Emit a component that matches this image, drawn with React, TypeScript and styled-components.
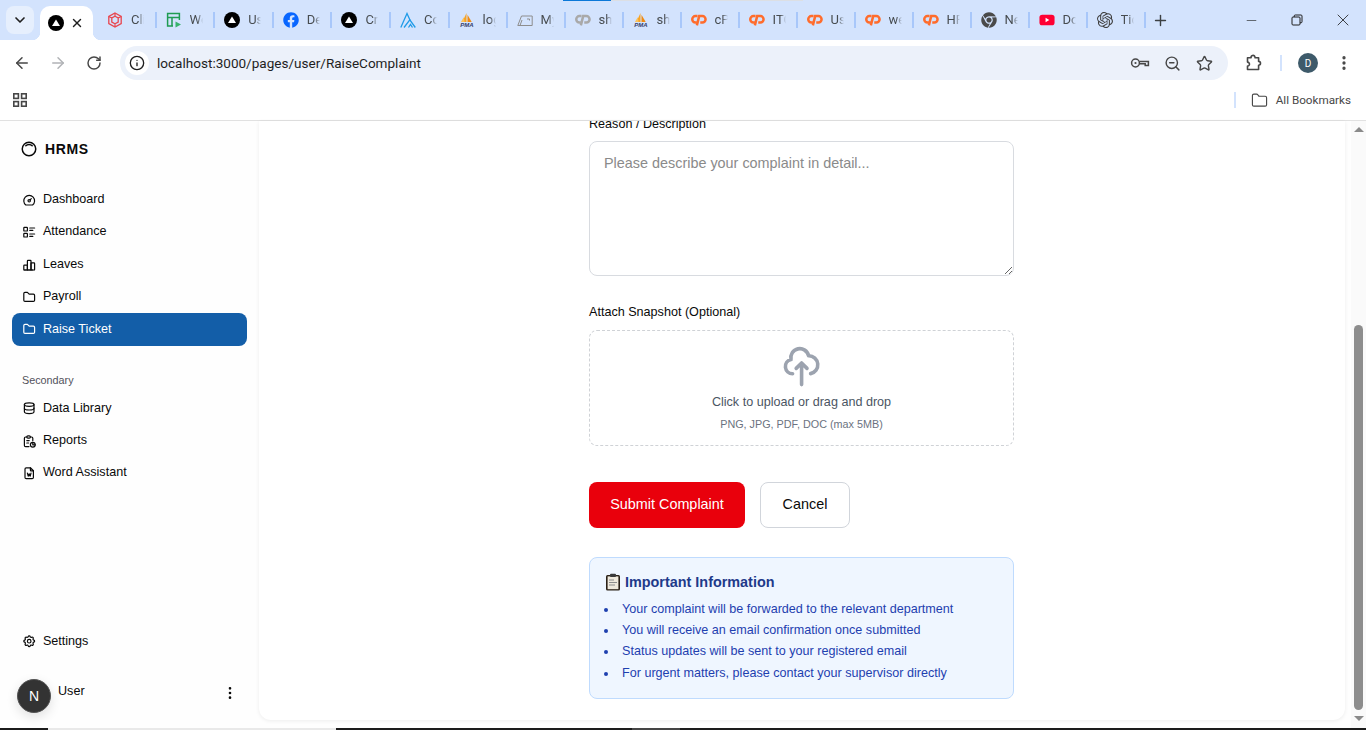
import React from 'react';
import styled, { createGlobalStyle } from 'styled-components';
import { ArrowLeft, ArrowRight, RotateCw, Info, ZoomOut, Star, X, Plus, ChevronDown, Minus, EllipsisVertical, Folder } from 'lucide-react';
import { FaFacebook, FaChrome } from 'react-icons/fa';
import { SiOpenai } from 'react-icons/si';
import {
  TbDashboard, TbListDetails, TbChartBar, TbFolder, TbDatabase, TbReport, TbFileWord,
  TbSettings, TbInnerShadowTop, TbDotsVertical,
} from 'react-icons/tb';

const GlobalStyle = createGlobalStyle`
  html, body { margin: 0; padding: 0; background: #fff; overflow: hidden; }
  * { box-sizing: border-box; }
`;

const Screen = styled.div`
  width: 1366px;
  height: 730px;
  display: flex;
  flex-direction: column;
  position: relative;
  overflow: hidden;
  font-family: "Liberation Sans", Arial, sans-serif;
  color: #0a0a0a;
`;

/* ---- browser chrome ---- */

const TabStrip = styled.div`
  height: 40px;
  flex: none;
  background: #d3e3fd;
  display: flex;
  align-items: flex-end;
  padding-left: 6px;
  position: relative;
  font-family: Roboto, sans-serif;
`;

const LoadingLine = styled.div`
  position: absolute;
  top: 0;
  left: 563px;
  width: 240px;
  height: 1px;
  background: linear-gradient(90deg, #0b78d8 0 48px, #dcdfe4 48px);
`;

const TabSearch = styled.div`
  width: 28px;
  height: 28px;
  margin: 0 6px 6px 0;
  border-radius: 8px;
  background: #e6effd;
  display: flex;
  align-items: center;
  justify-content: center;
  color: #1f1f1f;
`;

const ActiveTab = styled.div`
  width: 53px;
  height: 34px;
  margin-right: 4px;
  background: #fff;
  border-radius: 10px 10px 0 0;
  display: flex;
  align-items: center;
  padding-left: 8px;
  gap: 6px;
  position: relative;
  color: #1f1f1f;
  &::before, &::after {
    content: '';
    position: absolute;
    bottom: 0;
    width: 8px;
    height: 8px;
  }
  &::before { left: -8px; background: radial-gradient(circle at 0 0, transparent 8px, #fff 8.5px); }
  &::after { right: -8px; background: radial-gradient(circle at 100% 0, transparent 8px, #fff 8.5px); }
`;

const Tab = styled.div<{ $wide?: boolean }>`
  width: ${(p) => (p.$wide ? 58.6 : 58)}px;
  height: 40px;
  flex: none;
  display: flex;
  align-items: center;
  padding: 0 0 0 10px;
  gap: 8px;
  position: relative;
  &::after {
    content: '';
    position: absolute;
    right: -1px;
    top: 12px;
    width: 2px;
    height: 16px;
    background: #a8c7fa;
  }
`;

const TabIcon = styled.span`
  width: 16px;
  height: 16px;
  flex: none;
  display: flex;
  align-items: center;
  justify-content: center;
`;

const TabTitle = styled.span`
  width: 13px;
  font-size: 13px;
  line-height: 16px;
  color: #474c50;
  white-space: nowrap;
  overflow: hidden;
  -webkit-mask-image: linear-gradient(90deg, #000 55%, transparent);
  mask-image: linear-gradient(90deg, #000 55%, transparent);
`;

const NewTab = styled.div`
  width: 24px;
  height: 40px;
  margin-left: 4px;
  display: flex;
  align-items: center;
  justify-content: center;
  color: #3c4043;
`;

const WindowControls = styled.div`
  margin-left: auto;
  height: 40px;
  display: flex;
  color: #1f1f1f;
`;

const WindowButton = styled.div`
  width: 46px;
  height: 40px;
  display: flex;
  align-items: center;
  justify-content: center;
`;

const Toolbar = styled.div`
  height: 41px;
  flex: none;
  background: #fff;
  border-radius: 8px 8px 0 0;
  display: flex;
  align-items: center;
  padding: 6px 0 1px 4px;
  font-family: Roboto, sans-serif;
  color: #474747;
`;

const ToolButton = styled.div<{ $muted?: boolean; $w?: number }>`
  width: ${(p) => p.$w ?? 36}px;
  height: 32px;
  flex: none;
  display: flex;
  align-items: center;
  justify-content: center;
  color: ${(p) => (p.$muted ? '#b1b3b6' : '#474747')};
`;

const Omnibox = styled.div`
  width: 1108px;
  height: 34px;
  margin-left: 8px;
  flex: none;
  background: #ecf1fa;
  border-radius: 17px;
  display: flex;
  align-items: center;
  padding: 0 8px 0 5px;
`;

const SiteInfo = styled.div`
  width: 24px;
  height: 24px;
  border-radius: 50%;
  background: #fff;
  display: flex;
  align-items: center;
  justify-content: center;
  color: #1f1f1f;
`;

const Url = styled.div`
  margin-left: 8px;
  font-size: 13.55px;
  color: #1f1f1f;
  flex: 1;
`;

const ToolbarDivider = styled.div`
  width: 2px;
  height: 16px;
  background: #d3e3fd;
`;

const ProfileDot = styled.div`
  width: 20px;
  height: 20px;
  border-radius: 50%;
  background: #3e5a6a;
  color: #fff;
  font-size: 10px;
  display: flex;
  align-items: center;
  justify-content: center;
`;

const BookmarkBar = styled.div`
  height: 40px;
  flex: none;
  background: #fff;
  border-bottom: 1px solid #e1e1e1;
  display: flex;
  align-items: center;
  padding: 0 15px 1px 13px;
  font-family: Roboto, sans-serif;
  color: #474747;
`;

const BookmarkDivider = styled.div`
  width: 2px;
  height: 16px;
  margin-left: auto;
  background: #d3e3fd;
`;

const BookmarkFolder = styled.div`
  display: flex;
  align-items: center;
  gap: 8px;
  margin-left: 15px;
  font-size: 11.7px;
  color: #474747;
`;

/* ---- page ---- */

const PageBody = styled.div`
  flex: 1;
  min-height: 0;
  display: flex;
  background: #fefefe;
`;

const Sidebar = styled.aside`
  width: 259px;
  flex: none;
  display: flex;
  flex-direction: column;
  padding: 19px 12px 15.5px;
`;

const Brand = styled.div`
  display: flex;
  align-items: center;
  height: 18px;
  padding-left: 8px;
  gap: 7px;
  font-size: 14px;
  font-weight: 700;
  letter-spacing: 0.6px;
  color: #0a0a0a;
  margin-bottom: 25.5px;
`;

const NavItem = styled.div<{ $active?: boolean }>`
  height: 33px;
  margin-bottom: -0.6px;
  display: flex;
  align-items: center;
  gap: 7px;
  padding: 0 9.5px;
  border-radius: 8px;
  font-size: 12.6px;
  color: ${(p) => (p.$active ? '#fff' : '#0a0a0a')};
  background: ${(p) => (p.$active ? '#135ea8' : 'transparent')};
  & > span { position: relative; top: -1px; }
`;

const SectionLabel = styled.div`
  font-size: 10.8px;
  line-height: 14px;
  color: #52525b;
  padding-left: 10px;
  margin: 27.5px 0 5px;
`;

const SidebarFooter = styled.div`
  margin-top: auto;
`;

const UserRow = styled.div`
  display: flex;
  align-items: flex-start;
  height: 34px;
  margin-top: 21px;
  padding-left: 5px;
`;

const Avatar = styled.div`
  width: 34px;
  height: 34px;
  border-radius: 50%;
  background: #333;
  border: 1px solid #555;
  color: #fff;
  font-size: 14px;
  display: flex;
  align-items: center;
  justify-content: center;
  box-shadow: 0 4px 12px rgba(0, 0, 0, 0.12);
`;

const UserName = styled.div`
  margin: 5px 0 0 7px;
  font-size: 12.6px;
  flex: 1;
`;

const UserMenu = styled.div`
  width: 16px;
  margin: 6px 9px 0 0;
  display: flex;
  justify-content: center;
`;

const MainArea = styled.main`
  flex: 1;
  min-width: 0;
  padding: 0 6px 8px 0;
`;

const Card = styled.div`
  height: 100%;
  background: #fff;
  border-radius: 0 0 12px 12px;
  box-shadow: 0 1px 4px rgba(0, 0, 0, 0.07);
  overflow: hidden;
`;

const Form = styled.div`
  width: 425px;
  margin: -7px 0 0 330px;
  display: flex;
  flex-direction: column;
`;

const FieldLabel = styled.label`
  display: block;
  font-size: 12.6px;
  line-height: 20px;
  color: #0a0a0a;
  margin-bottom: 8px;
`;

const Textarea = styled.textarea`
  display: block;
  width: 425px;
  height: 135px;
  margin: -1px 0 26px;
  padding: 11px 14px;
  border: 1px solid #d8dbe0;
  border-radius: 8px;
  background: #fff;
  font-family: "Liberation Sans", Arial, sans-serif;
  font-size: 14.4px;
  line-height: 20px;
  outline: none;
  &::placeholder { color: #8a8a8a; }
`;

const DropZone = styled.div`
  height: 116px;
  border: 1px dashed #cfd2d6;
  border-radius: 8px;
  display: flex;
  flex-direction: column;
  align-items: center;
  padding-top: 14px;
  margin-bottom: 36px;
`;

const DropTitle = styled.div`
  margin-top: 3.8px;
  font-size: 12.6px;
  line-height: 20px;
  color: #4b5563;
`;

const DropHint = styled.div`
  margin-top: 2px;
  font-size: 10.8px;
  line-height: 20px;
  color: #6b7280;
`;

const Actions = styled.div`
  display: flex;
  gap: 15px;
  margin-bottom: 29px;
`;

const Button = styled.button<{ $primary?: boolean }>`
  height: 46px;
  width: ${(p) => (p.$primary ? 156 : 90)}px;
  border-radius: 8px;
  border: ${(p) => (p.$primary ? 'none' : '1px solid #d1d5db')};
  background: ${(p) => (p.$primary ? '#e9000c' : '#fff')};
  color: ${(p) => (p.$primary ? '#fff' : '#0a0a0a')};
  font-family: "Liberation Sans", Arial, sans-serif;
  font-size: 14.4px;
  padding: 0 0 2px;
`;

const InfoBox = styled.section`
  height: 142px;
  background: #eff6ff;
  border: 1px solid #bfdbfe;
  border-radius: 8px;
  padding: 14px 15px 0;
`;

const InfoTitle = styled.h3`
  margin: 0 0 6.5px;
  display: flex;
  align-items: center;
  gap: 4px;
  height: 20px;
  font-size: 14.4px;
  font-weight: 700;
  color: #1e3a8a;
`;

const InfoList = styled.ul`
  margin: 0;
  padding: 0 0 0 17px;
  list-style: none;
  font-size: 12.6px;
  line-height: 21.4px;
  color: #1e40af;
`;

const InfoItem = styled.li`
  position: relative;
  &::before {
    content: '';
    position: absolute;
    left: -18px;
    top: 9px;
    width: 4px;
    height: 4px;
    border-radius: 50%;
    background: #1e40af;
  }
`;

const ScrollTrack = styled.div`
  width: 15px;
  flex: none;
  background: #fafafa;
  display: flex;
  flex-direction: column;
  align-items: center;
  padding: 6px 0 7px;
`;

const ScrollArrow = styled.div<{ $down?: boolean }>`
  width: 0;
  height: 0;
  border-left: 5px solid transparent;
  border-right: 5px solid transparent;
  ${(p) => (p.$down ? 'border-top: 5px solid #8a8a8a;' : 'border-bottom: 5px solid #8a8a8a;')}
`;

const ScrollThumb = styled.div`
  width: 9px;
  height: 385px;
  margin-top: auto;
  margin-bottom: 6px;
  border-radius: 5px;
  background: #8d8d8d;
`;

const Taskbar = styled.div`
  height: 2px;
  flex: none;
  display: flex;
  background: #1b1b1b;
`;

const TaskSegment = styled.div<{ $w: number; $left: number; $color: string }>`
  width: ${(p) => p.$w}px;
  margin-left: ${(p) => p.$left}px;
  background: ${(p) => p.$color};
`;

/* ---- drawn icons ---- */

const NextIcon = () => (
  <svg width="16" height="16" viewBox="0 0 16 16">
    <circle cx="8" cy="8" r="8" fill="#000" />
    <path d="M8 4.4 12 11H4z" fill="#fff" />
  </svg>
);

const CubeIcon = () => (
  <svg width="16" height="16" viewBox="0 0 16 16" fill="none" stroke="#e8464f" strokeWidth="1.3">
    <path d="M8 1 14.2 4.5v7L8 15l-6.2-3.5v-7z" />
    <path d="M8 4.2 11.2 6v4L8 11.8 4.8 10V6zM8 1v3.2M14.2 4.5 11.2 6M1.8 4.5 4.8 6M8 15v-3.2" />
  </svg>
);

const SheetIcon = () => (
  <svg width="16" height="16" viewBox="0 0 16 16" fill="none">
    <path d="M7 14H1.6V1.6h11.8V8M1.6 5.4h11.8M6 5.4V14" stroke="#1e9b52" strokeWidth="1.5" />
    <path d="M9.5 9.5 15 12.4 9.5 15.4z" fill="#37b36c" />
  </svg>
);

const PeaksIcon = () => (
  <svg width="16" height="17" viewBox="0 0 16 17" fill="none" stroke="#1f9be8" strokeWidth="1.3">
    <path d="M.8 15.5 7 1.5l3.2 7" />
    <path d="M4 15.5 9.8 7.8l5.5 7.7" />
    <path d="M8.5 15.5l2-3 2 3" />
  </svg>
);

const PmaIcon = () => (
  <svg width="17" height="16" viewBox="0 0 17 16">
    <path d="M8 .5 3.5 10H8z" fill="#f7a324" />
    <path d="M9 2.5 13.5 10H9z" fill="#f08a12" />
    <path d="M2 10 5 5 6 10z" fill="#fbc25b" />
    <text x="8.5" y="15.6" fontSize="6.4" fontWeight="700" fontStyle="italic" textAnchor="middle" fill="#34406b" fontFamily="Liberation Sans">PMA</text>
  </svg>
);

const WorkbenchIcon = () => (
  <svg width="16" height="16" viewBox="0 0 16 16" fill="none" stroke="#8d8d8d" strokeWidth="1">
    <path d="M.8 13.5 4.5 4h10.7v9.5z" />
    <path d="M3 13.5 5 8M10 7h2.5v1.5" />
  </svg>
);

const CpanelIcon = ({ color }: { color: string }) => (
  <svg width="17" height="14" viewBox="0 0 18 14" fill="none" stroke={color} strokeWidth="2.8">
    <path d="M7.4 2.6H5a3.6 3.6 0 0 0 0 7.2h1.6" />
    <path d="M6.6 13 9.2 2.6h3.6a3.6 3.6 0 0 1 0 7.2h-2.4" />
  </svg>
);

const YoutubeIcon = () => (
  <svg width="18" height="16" viewBox="0 0 18 16">
    <rect x="0.5" y="2" width="17" height="12" rx="3.2" fill="#ff0033" />
    <path d="M7.4 5.6 11.6 8l-4.2 2.4z" fill="#fff" />
  </svg>
);

const KeyIcon = () => (
  <svg width="20" height="20" viewBox="0 0 20 20" fill="none" stroke="currentColor" strokeWidth="1.5">
    <circle cx="5.5" cy="10" r="3.9" />
    <circle cx="5.5" cy="10" r="1.1" fill="currentColor" stroke="none" />
    <path d="M9.4 8.4h9v4h-3.2v-1.6H9.4" />
  </svg>
);

const PuzzleIcon = () => (
  <svg width="20" height="20" viewBox="0 0 20 20" fill="none" stroke="currentColor" strokeWidth="1.6" strokeLinejoin="round">
    <path d="M3.5 4.8h3.6a2 2 0 0 1 3.8-1.2c.2.4.2.8.1 1.2h3.6v3.6a1.9 1.9 0 0 1 0 3.8v4.3H3.5v-3.4a2 2 0 0 0 1.6-3.2 2 2 0 0 0-1.6-.8z" />
  </svg>
);

const AppsIcon = () => (
  <svg width="14" height="14" viewBox="0 0 14 14" fill="none" stroke="#474747" strokeWidth="1.6">
    <rect x="0.8" y="0.8" width="4.6" height="4.6" />
    <rect x="8.6" y="0.8" width="4.6" height="4.6" />
    <rect x="0.8" y="8.6" width="4.6" height="4.6" />
    <rect x="8.6" y="8.6" width="4.6" height="4.6" />
  </svg>
);

const RestoreIcon = () => (
  <svg width="12" height="12" viewBox="0 0 12 12" fill="none" stroke="currentColor" strokeWidth="1">
    <rect x="1" y="3" width="8" height="8" rx="1" />
    <path d="M3.2 3V2a1 1 0 0 1 1-1H10a1 1 0 0 1 1 1v5.8a1 1 0 0 1-1 1H9" />
  </svg>
);

const CloudUploadIcon = () => (
  <svg width="43.2" height="43.2" viewBox="0 0 24 24" fill="none" stroke="#9ca3af" strokeWidth="2" strokeLinecap="round" strokeLinejoin="round">
    <path d="M7 16a4 4 0 01-.88-7.903A5 5 0 1115.9 6L16 6a5 5 0 011 9.9M15 13l-3-3m0 0l-3 3m3-3v12" />
  </svg>
);

const ClipboardIcon = () => (
  <svg width="16" height="18" viewBox="0 0 16 18">
    <rect x="1" y="2" width="14" height="15.5" rx="1.5" fill="#2b2117" />
    <rect x="2.6" y="3.4" width="10.8" height="12.8" fill="#efe9dc" />
    <rect x="5" y="0.8" width="6" height="3.2" rx="1" fill="#3a3a3a" />
    <path d="M4 7h5M4 9.5h8M4 12h6" stroke="#8d8d8d" strokeWidth="1.1" />
  </svg>
);

/* ---- data ---- */

const cpanel = <CpanelIcon color="#ff6c2c" />;

const tabs: { icon: React.ReactNode; title: string }[] = [
  { icon: <CubeIcon />, title: 'Client' },
  { icon: <SheetIcon />, title: 'Web' },
  { icon: <NextIcon />, title: 'Users' },
  { icon: <FaFacebook size={16} color="#0866ff" />, title: 'Dev' },
  { icon: <NextIcon />, title: 'Create' },
  { icon: <PeaksIcon />, title: 'Coolify' },
  { icon: <PmaIcon />, title: 'login' },
  { icon: <WorkbenchIcon />, title: 'MySQL' },
  { icon: <CpanelIcon color="#a9a9a9" />, title: 'shop' },
  { icon: <PmaIcon />, title: 'shop' },
  { icon: cpanel, title: 'cPanel' },
  { icon: cpanel, title: 'ITC' },
  { icon: cpanel, title: 'Users' },
  { icon: cpanel, title: 'web' },
  { icon: cpanel, title: 'HR' },
  { icon: <FaChrome size={16} color="#4a4a4a" />, title: 'New' },
  { icon: <YoutubeIcon />, title: 'Docs' },
  { icon: <SiOpenai size={16} color="#3f3f3f" />, title: 'Tickets' },
];

const primaryNav = [
  { icon: TbDashboard, label: 'Dashboard' },
  { icon: TbListDetails, label: 'Attendance' },
  { icon: TbChartBar, label: 'Leaves' },
  { icon: TbFolder, label: 'Payroll' },
  { icon: TbFolder, label: 'Raise Ticket', active: true },
];

const secondaryNav = [
  { icon: TbDatabase, label: 'Data Library' },
  { icon: TbReport, label: 'Reports' },
  { icon: TbFileWord, label: 'Word Assistant' },
];

const notes = [
  'Your complaint will be forwarded to the relevant department',
  'You will receive an email confirmation once submitted',
  'Status updates will be sent to your registered email',
  'For urgent matters, please contact your supervisor directly',
];

function App() {
  return (
    <Screen>
      <GlobalStyle />
      <TabStrip>
        <LoadingLine />
        <TabSearch><ChevronDown size={16} strokeWidth={2.5} /></TabSearch>
        <ActiveTab>
          <TabIcon><NextIcon /></TabIcon>
          <X size={14} strokeWidth={2.5} />
        </ActiveTab>
        {tabs.map((tab, idx) => (
          <Tab key={idx} $wide={idx < 6}>
            <TabIcon>{tab.icon}</TabIcon>
            <TabTitle>{tab.title}</TabTitle>
          </Tab>
        ))}
        <NewTab><Plus size={17} strokeWidth={2} /></NewTab>
        <WindowControls>
          <WindowButton><Minus size={15} strokeWidth={1} /></WindowButton>
          <WindowButton><RestoreIcon /></WindowButton>
          <WindowButton><X size={20} strokeWidth={1} /></WindowButton>
        </WindowControls>
      </TabStrip>

      <Toolbar>
        <ToolButton><ArrowLeft size={18} /></ToolButton>
        <ToolButton $muted><ArrowRight size={18} /></ToolButton>
        <ToolButton><RotateCw size={16} strokeWidth={2.2} /></ToolButton>
        <Omnibox>
          <SiteInfo><Info size={16} /></SiteInfo>
          <Url>localhost:3000/pages/user/RaiseComplaint</Url>
          <ToolButton $w={32}><KeyIcon /></ToolButton>
          <ToolButton $w={32}><ZoomOut size={17} /></ToolButton>
          <ToolButton $w={32}><Star size={17} strokeWidth={2} /></ToolButton>
        </Omnibox>
        <ToolButton $w={52}><PuzzleIcon /></ToolButton>
        <ToolbarDivider />
        <ToolButton $w={52}><ProfileDot>D</ProfileDot></ToolButton>
        <ToolButton $w={20}><EllipsisVertical size={18} strokeWidth={2.4} /></ToolButton>
      </Toolbar>

      <BookmarkBar>
        <AppsIcon />
        <BookmarkDivider />
        <BookmarkFolder><Folder size={17} strokeWidth={1.6} />All Bookmarks</BookmarkFolder>
      </BookmarkBar>

      <PageBody>
        <Sidebar>
          <Brand><TbInnerShadowTop size={18} />HRMS</Brand>
          {primaryNav.map((item) => (
            <NavItem key={item.label} $active={item.active}>
              <item.icon size={14.4} /><span>{item.label}</span>
            </NavItem>
          ))}
          <SectionLabel>Secondary</SectionLabel>
          {secondaryNav.map((item) => (
            <NavItem key={item.label}>
              <item.icon size={14.4} /><span>{item.label}</span>
            </NavItem>
          ))}
          <SidebarFooter>
            <NavItem><TbSettings size={14.4} /><span>Settings</span></NavItem>
            <UserRow>
              <Avatar>N</Avatar>
              <UserName>User</UserName>
              <UserMenu><TbDotsVertical size={16} /></UserMenu>
            </UserRow>
          </SidebarFooter>
        </Sidebar>

        <MainArea>
          <Card>
            <Form>
              <FieldLabel>Reason / Description</FieldLabel>
              <Textarea placeholder="Please describe your complaint in detail..." />
              <FieldLabel>Attach Snapshot (Optional)</FieldLabel>
              <DropZone>
                <CloudUploadIcon />
                <DropTitle>Click to upload or drag and drop</DropTitle>
                <DropHint>PNG, JPG, PDF, DOC (max 5MB)</DropHint>
              </DropZone>
              <Actions>
                <Button $primary>Submit Complaint</Button>
                <Button>Cancel</Button>
              </Actions>
              <InfoBox>
                <InfoTitle><ClipboardIcon />Important Information</InfoTitle>
                <InfoList>
                  {notes.map((note) => <InfoItem key={note}>{note}</InfoItem>)}
                </InfoList>
              </InfoBox>
            </Form>
          </Card>
        </MainArea>

        <ScrollTrack>
          <ScrollArrow />
          <ScrollThumb />
          <ScrollArrow $down />
        </ScrollTrack>
      </PageBody>

      <Taskbar>
        <TaskSegment $w={288} $left={48} $color="#e9e9e9" />
        <TaskSegment $w={48} $left={296} $color="#444" />
      </Taskbar>
    </Screen>
  );
}

export default App;
